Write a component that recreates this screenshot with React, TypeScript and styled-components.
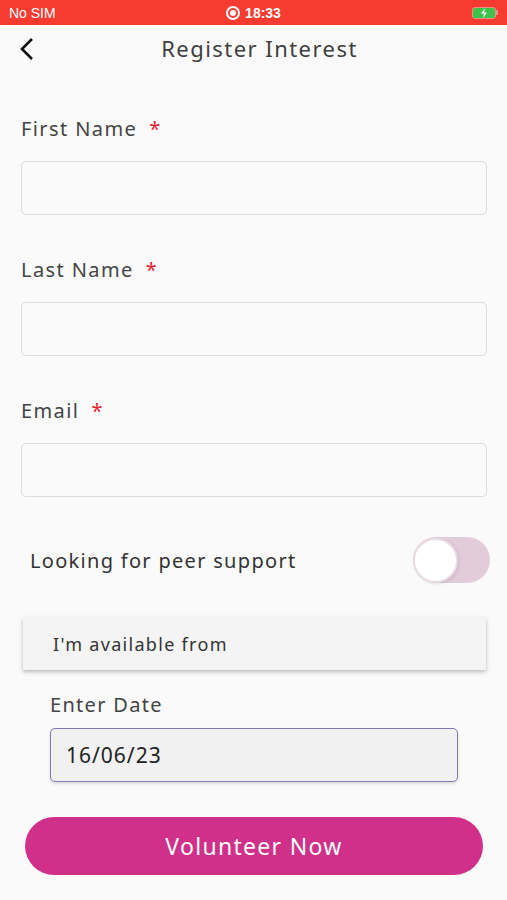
import styled, { createGlobalStyle } from 'styled-components'

const GlobalStyle = createGlobalStyle`
  html, body {
    margin: 0;
    padding: 0;
    background: #fafafa;
  }
  * {
    box-sizing: border-box;
  }
`

const fields = [
  { id: 'firstName', label: 'First Name' },
  { id: 'lastName', label: 'Last Name' },
  { id: 'email', label: 'Email' }
]

const App: React.FC = () => (
  <Screen>
    <GlobalStyle />
    <StatusBar>
      <StatusLeft>No SIM</StatusLeft>
      <StatusCenter>
        <RecordDot />
        18:33
      </StatusCenter>
      <Battery>
        <BatteryFill>
          <svg width="10" height="10" viewBox="0 0 10 10">
            <path d="M6 0 L2 5.5 H5 L4 10 L8 4.5 H5 Z" fill="#fff" />
          </svg>
        </BatteryFill>
        <BatteryCap />
      </Battery>
    </StatusBar>

    <Header>
      <BackButton>
        <svg width="16" height="24" viewBox="0 0 16 24">
          <path d="M13 2 L3 12 L13 22" fill="none" stroke="#111" strokeWidth="2.6" />
        </svg>
      </BackButton>
      <Title>Register Interest</Title>
    </Header>

    <Form>
      {fields.map(field => <Field key={field.id}>
        <Label>
          {field.label}
          <Required>*</Required>
        </Label>
        <Input />
      </Field>)}

      <ToggleRow>
        <ToggleText>Looking for peer support</ToggleText>
        <Switch>
          <Thumb />
        </Switch>
      </ToggleRow>

      <AvailableCard>I'm available from</AvailableCard>

      <DateBlock>
        <DateLabel>Enter Date</DateLabel>
        <DateInput>16/06/23</DateInput>
      </DateBlock>

      <SubmitButton>Volunteer Now</SubmitButton>
    </Form>
  </Screen>
)

export default App

const Screen = styled.div`
  width: 507px;
  min-height: 900px;
  background: #fafafa;
  font-family: 'Noto Sans', 'Open Sans', sans-serif;
  color: #444;
`
const StatusBar = styled.div`
  height: 25px;
  background: #f73b30;
  display: grid;
  grid-template-columns: 1fr auto 1fr;
  align-items: center;
  padding: 0 9px 0 9px;
  color: #fff;
  font-family: 'Liberation Sans', Arial, sans-serif;
  font-size: 14px;
`
const StatusLeft = styled.div``
const StatusCenter = styled.div`
  display: flex;
  align-items: center;
  gap: 5px;
  font-weight: bold;
`
const RecordDot = styled.span`
  width: 14px;
  height: 14px;
  border: 2px solid #fff;
  border-radius: 50%;
  display: flex;
  align-items: center;
  justify-content: center;
  &::after {
    content: '';
    width: 6px;
    height: 6px;
    border-radius: 50%;
    background: #fff;
  }
`
const Battery = styled.div`
  justify-self: end;
  display: flex;
  align-items: center;
`
const BatteryFill = styled.div`
  width: 24px;
  height: 12px;
  border: 1.5px solid #f08d86;
  border-radius: 3px;
  background: #3ec24a;
  display: flex;
  align-items: center;
  justify-content: center;
`
const BatteryCap = styled.div`
  width: 2px;
  height: 5px;
  background: #f08d86;
  border-radius: 0 1px 1px 0;
`
const Header = styled.div`
  height: 46px;
  display: flex;
  align-items: center;
  justify-content: center;
  position: relative;
`
const BackButton = styled.div`
  position: absolute;
  left: 19px;
  top: 12px;
  display: flex;
`
const Title = styled.h1`
  margin: 0;
  font-size: 22px;
  font-weight: 400;
  letter-spacing: 1.45px;
  color: #3e3e3e;
  margin-left: 12px;
`
const Form = styled.div`
  padding: 43px 20px 0 21px;
  display: flex;
  flex-direction: column;
`
const Field = styled.div`
  display: flex;
  flex-direction: column;
  margin-bottom: 40px;
`
const Label = styled.div`
  font-size: 20px;
  line-height: 29px;
  letter-spacing: 1.4px;
  color: #444;
  display: flex;
  gap: 12px;
  margin-bottom: 18px;
`
const Required = styled.span`
  color: #e5202b;
`
const Input = styled.div`
  height: 54px;
  border: 1.5px solid #dcdcdc;
  border-radius: 5px;
  background: #fafafa;
`
const ToggleRow = styled.div`
  display: flex;
  align-items: center;
  justify-content: space-between;
  padding: 0 0 0 9px;
  margin-right: -3px;
`
const ToggleText = styled.div`
  font-size: 20px;
  letter-spacing: 1.3px;
  color: #333;
`
const Switch = styled.div`
  width: 77px;
  height: 46px;
  border-radius: 23px;
  background: #e3ccda;
  display: flex;
  align-items: center;
`
const Thumb = styled.div`
  width: 45px;
  height: 45px;
  border-radius: 50%;
  background: #fff;
  border: 2px solid #e8dde4;
  box-shadow: 1px 1px 3px rgba(0, 0, 0, 0.12);
`
const AvailableCard = styled.div`
  margin: 34px 1px 0 2px;
  height: 53px;
  background: #f4f4f4;
  box-shadow: 0 2px 4px rgba(0, 0, 0, 0.25);
  display: flex;
  align-items: center;
  padding-left: 30px;
  font-size: 18px;
  letter-spacing: 1.3px;
  color: #333;
`
const DateBlock = styled.div`
  padding: 21px 0 0 29px;
  width: 437px;
`
const DateLabel = styled.div`
  font-size: 20px;
  letter-spacing: 1.3px;
  color: #444;
  margin-bottom: 10px;
`
const DateInput = styled.div`
  height: 54px;
  border: 1.5px solid #7f79b5;
  border-radius: 5px;
  background: #f1f1f1;
  box-shadow: 0 2px 3px rgba(0, 0, 0, 0.12);
  display: flex;
  align-items: center;
  padding-left: 15px;
  font-size: 21px;
  letter-spacing: 1px;
  color: #222;
`
const SubmitButton = styled.button`
  margin: 35px 4px 0 4px;
  height: 58px;
  border: none;
  border-radius: 29px;
  background: #d1308a;
  color: #fff;
  font-family: inherit;
  font-size: 23px;
  letter-spacing: 1.3px;
  cursor: pointer;
`
